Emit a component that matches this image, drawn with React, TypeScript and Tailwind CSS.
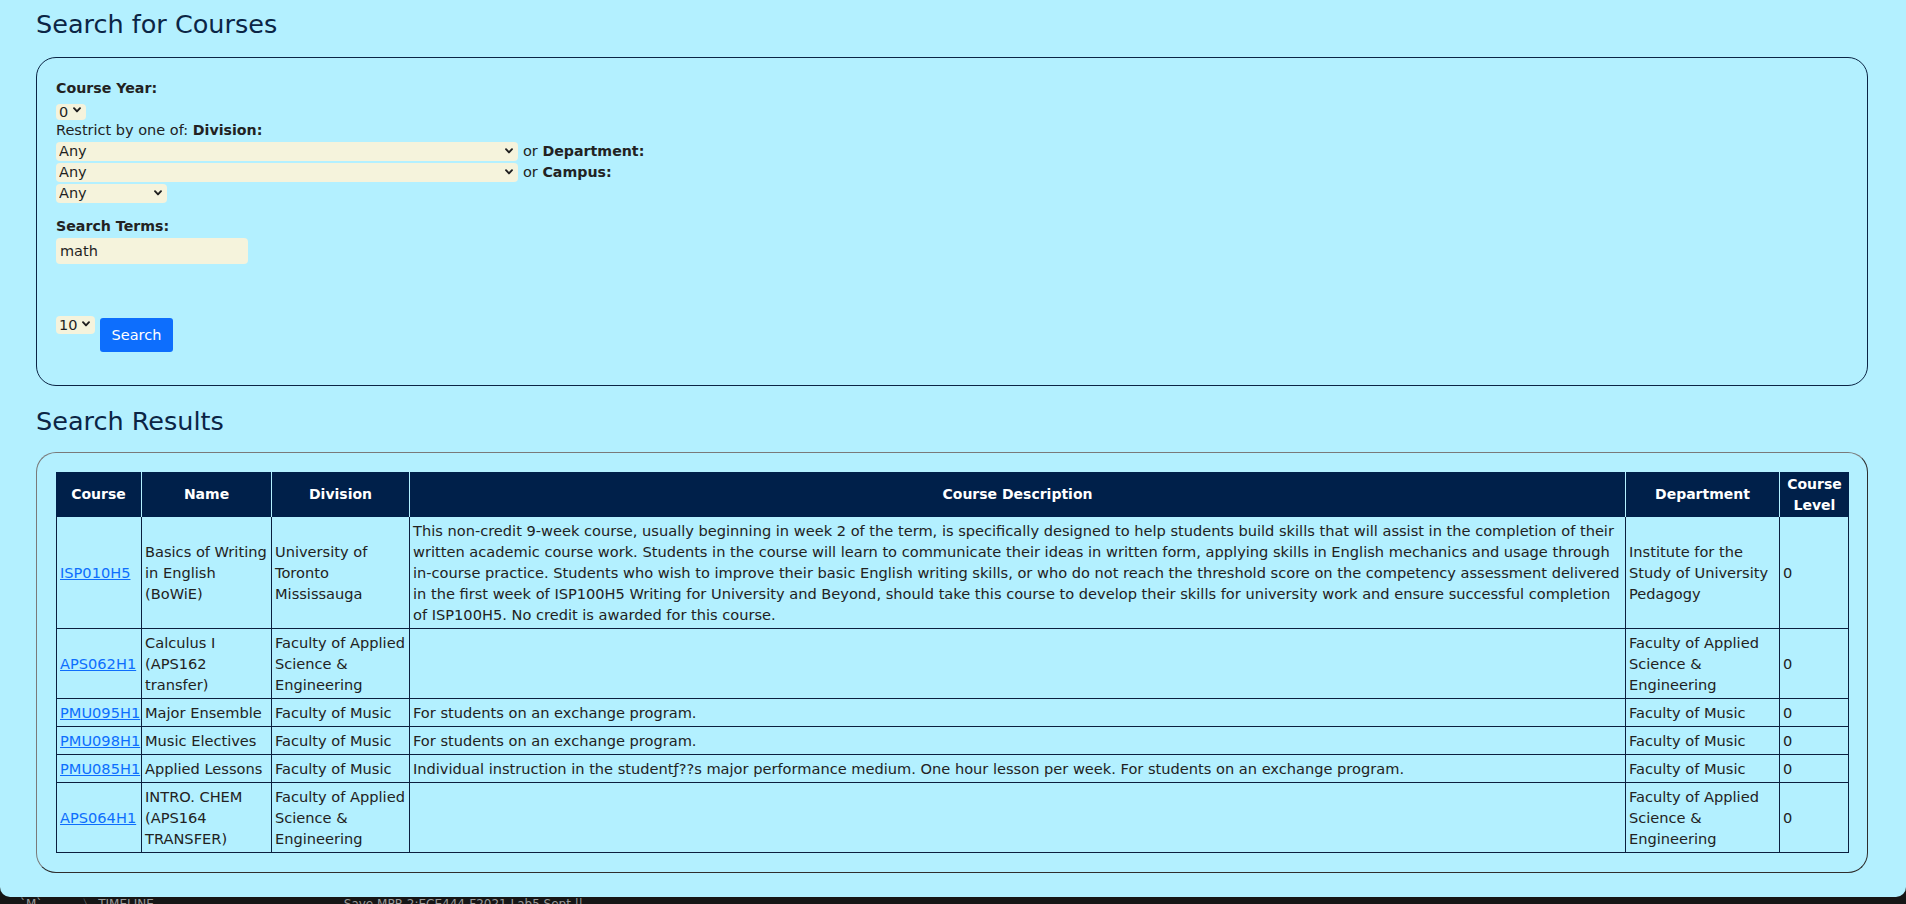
import React from "react";

interface CourseRow {
  code: string;
  name: string;
  division: string;
  description: string;
  department: string;
  level: string;
}

const rows: CourseRow[] = [
  {
    code: "ISP010H5",
    name: "Basics of Writing in English (BoWiE)",
    division: "University of Toronto Mississauga",
    description:
      "This non-credit 9-week course, usually beginning in week 2 of the term, is specifically designed to help students build skills that will assist in the completion of their written academic course work. Students in the course will learn to communicate their ideas in written form, applying skills in English mechanics and usage through in-course practice. Students who wish to improve their basic English writing skills, or who do not reach the threshold score on the competency assessment delivered in the first week of ISP100H5 Writing for University and Beyond, should take this course to develop their skills for university work and ensure successful completion of ISP100H5. No credit is awarded for this course.",
    department: "Institute for the Study of University Pedagogy",
    level: "0",
  },
  {
    code: "APS062H1",
    name: "Calculus I (APS162 transfer)",
    division: "Faculty of Applied Science & Engineering",
    description: "",
    department: "Faculty of Applied Science & Engineering",
    level: "0",
  },
  {
    code: "PMU095H1",
    name: "Major Ensemble",
    division: "Faculty of Music",
    description: "For students on an exchange program.",
    department: "Faculty of Music",
    level: "0",
  },
  {
    code: "PMU098H1",
    name: "Music Electives",
    division: "Faculty of Music",
    description: "For students on an exchange program.",
    department: "Faculty of Music",
    level: "0",
  },
  {
    code: "PMU085H1",
    name: "Applied Lessons",
    division: "Faculty of Music",
    description:
      "Individual instruction in the student\u0192??s major performance medium. One hour lesson per week. For students on an exchange program.",
    department: "Faculty of Music",
    level: "0",
  },
  {
    code: "APS064H1",
    name: "INTRO. CHEM (APS164 TRANSFER)",
    division: "Faculty of Applied Science & Engineering",
    description: "",
    department: "Faculty of Applied Science & Engineering",
    level: "0",
  },
];

function Chevron() {
  return (
    <svg
      className="pointer-events-none absolute right-[5px] top-1/2 -translate-y-1/2"
      width="8"
      height="6"
      viewBox="0 0 8 6"
      fill="none"
    >
      <path d="M1 1.2 L4 4.4 L7 1.2" stroke="#1f1f1f" strokeWidth="1.9" strokeLinecap="round" strokeLinejoin="round" />
    </svg>
  );
}

function Select({ value, className }: { value: string; className: string }) {
  return (
    <span className={"relative inline-block shrink-0 " + className}>
      <select
        defaultValue={value}
        className="h-full w-full appearance-none rounded-[4px] bg-[#f5f3dc] pl-[3px] text-[14.5px] leading-none text-[#1f1f1f] outline-none"
      >
        <option>{value}</option>
      </select>
      <Chevron />
    </span>
  );
}

const cell = "border-b border-r border-[#0b1f3f] px-[3px] py-[3px] align-middle text-[14.6px]";

export default function App() {
  return (
    <div className="min-h-screen bg-[#161616] font-['DejaVu_Sans',sans-serif] text-[14.5px] leading-[21px] text-[#222]">
      <div className="h-[897px] overflow-hidden rounded-b-[10px] bg-[#b3f0ff] pl-[36px] pr-[38px]">
        <h2 className="pt-[9px] text-[25.5px] leading-[30px] text-[#0b2545]">Search for Courses</h2>

        <div className="mt-[18px] rounded-[20px] border border-[#0b2545] pb-[33px] pl-[19px] pt-[20px]">
          <div className="text-[14.2px] font-bold">Course Year:</div>
          <div className="flex h-[21px] items-center">
            <Select value="0" className="h-[16px] w-[30px]" />
          </div>
          <div>
            Restrict by one of: <b className="text-[14.2px]">Division:</b>
          </div>
          <div className="flex h-[21px] items-start gap-[5px]">
            <Select value="Any" className="h-[19px] w-[462px]" />
            <span>
              or <b className="text-[14.2px]">Department:</b>
            </span>
          </div>
          <div className="flex h-[21px] items-start gap-[5px]">
            <Select value="Any" className="h-[19px] w-[462px]" />
            <span>
              or <b className="text-[14.2px]">Campus:</b>
            </span>
          </div>
          <div className="flex h-[21px] items-start">
            <Select value="Any" className="h-[19px] w-[111px]" />
          </div>

          <div className="mt-[12px] text-[14.2px] font-bold">Search Terms:</div>
          <input
            defaultValue="math"
            className="mt-[1px] block h-[26px] w-[192px] rounded-[4px] bg-[#f5f3dc] pl-[4px] text-[14.5px] text-[#1f1f1f] outline-none"
          />

          <div className="mt-[51px] flex items-start gap-[5px]">
            <Select value="10" className="h-[18px] w-[39px]" />
            <button className="mt-[3px] h-[34px] w-[73px] rounded-[3px] bg-[#0d6efd] text-[14.5px] text-white">
              Search
            </button>
          </div>
        </div>

        <h2 className="mt-[20px] text-[25.5px] leading-[30px] text-[#0b2545]">Search Results</h2>

        <div className="mt-[16px] rounded-[20px] border border-b-[#2e2e2e] border-l-[#7a7a7a] border-r-[#2e2e2e] border-t-[#7a7a7a] pb-[19px] pl-[19px] pr-[18px] pt-[19px]">
          <table className="w-full table-fixed border-separate border-spacing-0">
            <colgroup>
              <col className="w-[86px]" />
              <col className="w-[130px]" />
              <col className="w-[138px]" />
              <col />
              <col className="w-[154px]" />
              <col className="w-[69px]" />
            </colgroup>
            <thead>
              <tr className="bg-[#00204a] text-white">
                {["Course", "Name", "Division", "Course Description", "Department", "Course Level"].map((h, i) => (
                  <th
                    key={h}
                    className={
                      "h-[45px] px-[3px] py-0 text-center align-middle text-[14px] font-bold " +
                      (i < 5 ? "border-r border-r-[#b3f0ff]" : "")
                    }
                  >
                    {h}
                  </th>
                ))}
              </tr>
            </thead>
            <tbody>
              {rows.map((r) => (
                <tr key={r.code}>
                  <td className={cell + " border-l"}>
                    <a href="#" className="text-[#0d6efd] underline">
                      {r.code}
                    </a>
                  </td>
                  <td className={cell}>{r.name}</td>
                  <td className={cell}>{r.division}</td>
                  <td className={cell}>{r.description}</td>
                  <td className={cell}>{r.department}</td>
                  <td className={cell}>{r.level}</td>
                </tr>
              ))}
            </tbody>
          </table>
        </div>
      </div>
      <div className="flex h-[7px] items-start overflow-hidden pt-[1px] text-[12px] leading-[12px] text-[#9a9a9a]">
        <span className="ml-[20px]">`M`</span>
        <span className="ml-[40px]">〉 TIMELINE</span>
        <span className="ml-[190px]">Save MPR 2:ECE444-F2021 Lab5 Sept ||</span>
      </div>
    </div>
  );
}
